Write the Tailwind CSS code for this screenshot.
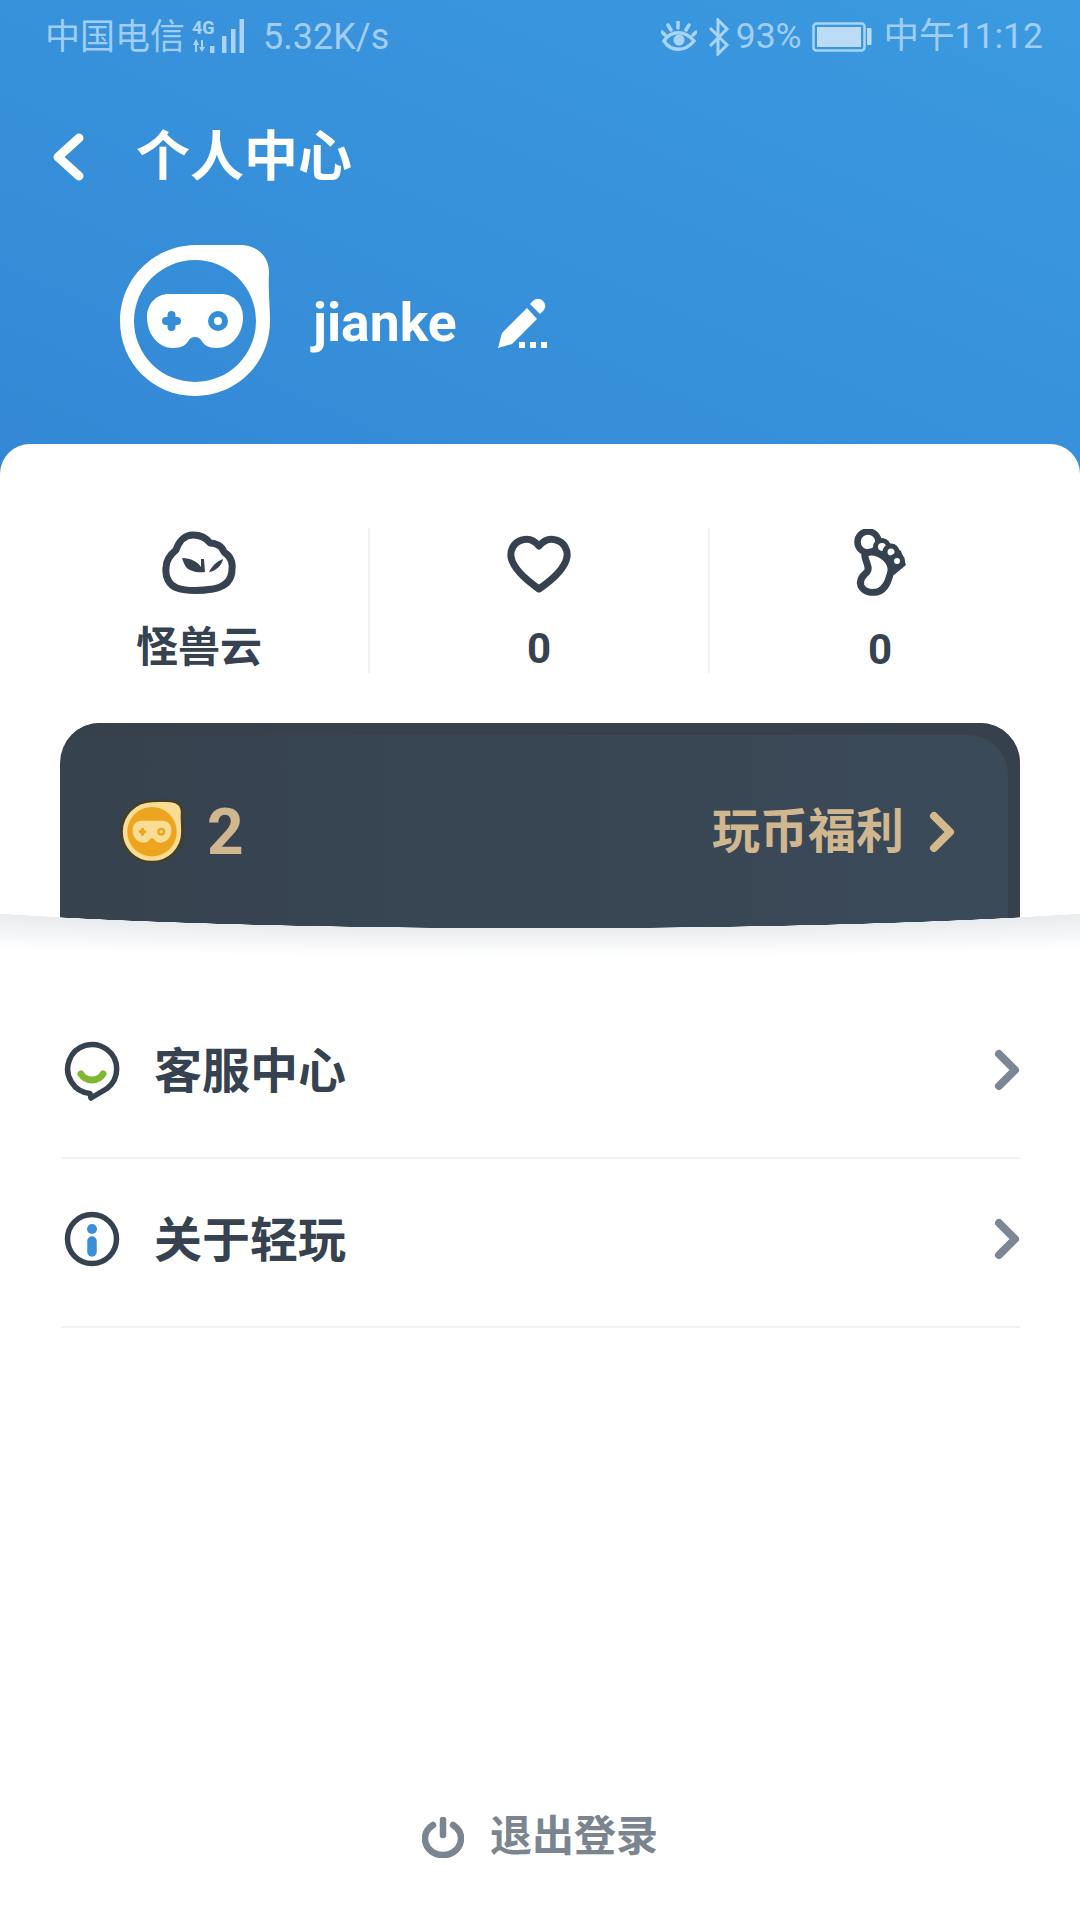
<!DOCTYPE html>
<html lang="zh-CN">

<head>
    <meta charset="UTF-8">
    <meta name="viewport" content="width=device-width, initial-scale=1.0">
    <title>个人中心</title>
    <script src="https://cdn.jsdelivr.net/npm/@tailwindcss/browser@4"></script>
</head>

<body class="font-['Roboto','Noto_Sans_CJK_SC',sans-serif] bg-white">
    <div class="w-[1080px] h-[1920px] flex flex-col overflow-hidden">

        <!-- blue header -->
        <header class="h-[474px] shrink-0 bg-linear-to-tr from-[#3488d5] to-[#3b9ae0] text-white">
            <!-- status bar -->
            <div class="h-[74px] pl-[45px] pr-[37px] flex items-center justify-between text-[#a0cdf4] text-[35.500px] leading-none">
                <div class="flex items-center">
                    <span class="text-[35px]">中国电信</span>
                    <svg class="ml-[6px]" width="54" height="40" viewBox="191 16 54 40" fill="#a9d4f5">
                        <text x="192" y="33" font-size="18" font-weight="700" font-family="Roboto">4G</text>
                        <path d="M196 38l-3 6h2v7h2v-7h2zM202 51l3-5h-2v-7h-2v7h-2z" />
                        <rect x="210" y="45" width="4.500" height="7" />
                        <rect x="222" y="35" width="4.500" height="17" />
                        <rect x="231" y="28" width="4.500" height="24" />
                        <rect x="239.500" y="18" width="4.500" height="34" />
                    </svg>
                    <span class="ml-[18px] text-[36px]">5.32K/s</span>
                </div>
                <div class="flex items-center">
                    <svg width="36" height="32" viewBox="657 22 36 32" fill="none" stroke="#a9d4f5" stroke-width="3.500" stroke-linecap="round">
                        <path d="M660 42C667 31 681 31 690 42C681 53 667 53 660 42Z" />
                        <path d="M674 23v6M664 26l3 5M685 26l-3 5M658 33l3 3M692 33l-3 3" />
                        <circle cx="675" cy="41" r="5.500" fill="#a9d4f5" stroke="none" />
                    </svg>
                    <svg class="ml-[11px]" width="22" height="38" viewBox="703 17 22 38" fill="none" stroke="#a9d4f5" stroke-width="3">
                        <path d="M705 27L722 44L713 53V19L722 28L705 45" />
                    </svg>
                    <span class="ml-[6px]">93%</span>
                    <svg class="ml-[10px]" width="60" height="30" viewBox="803 22 60 30" fill="none">
                        <rect x="804.500" y="23.500" width="51" height="27" rx="3" stroke="#a9d4f5" stroke-width="2.500" />
                        <rect x="808" y="27" width="44" height="20" fill="#bcdcf5" />
                        <rect x="858" y="28" width="4.500" height="17" rx="1" fill="#bcdcf5" />
                    </svg>
                    <span class="ml-[12px]">中午11:12</span>
                </div>
            </div>

            <!-- title -->
            <div class="h-[84px] mt-[42px] pl-[52px] flex items-center">
                <svg width="32" height="50" viewBox="50 132 32 50" fill="none" stroke="#fff" stroke-width="9" stroke-linecap="round" stroke-linejoin="round">
                    <path d="M77 137L56 156L77 175" />
                </svg>
                <h1 class="ml-[52px] text-[54px] leading-none font-bold">个人中心</h1>
            </div>

            <!-- profile -->
            <div class="mt-[45px] pl-[120px] flex items-center">
                <svg width="150" height="151" viewBox="0 0 150 151">
                    <path fill="#fff" fill-rule="evenodd" d="M0 76C0 34 33 1 75 0C95 0 110 -1 122 0C138 1 150 12 149 30C148 45 150 60 150 76C150 118 117 151 75 151C33 151 0 118 0 76ZM75 15A61 61 0 1 0 75 137A61 61 0 1 0 75 15Z" />
                    <path fill="#fff" d="M49 49H101C114 49 123 59 123 72C123 90 111 103 97 103C88 103 84 100 81 95C79 91 71 91 69 95C66 100 62 103 53 103C39 103 27 90 27 72C27 59 36 49 49 49Z" />
                    <path fill="none" stroke="#378ed8" stroke-width="8" stroke-linecap="round" d="M46 76H57M51.500 70V82" />
                    <circle cx="98" cy="76" r="7" fill="none" stroke="#378ed8" stroke-width="6" />
                </svg>
                <span class="ml-[43px] mt-[4px] text-[53.500px] leading-none font-bold">jianke</span>
                <svg class="ml-[40px] mt-[6px]" width="52" height="54" viewBox="497 295 52 54" fill="#fff">
                    <path d="M498 346L502 331L527 306L537 317L512 342Z" />
                    <path d="M530 302L533 299C536 296 540 296 543 299C546 302 546 306 543 309L540 312Z" />
                    <rect x="519" y="340" width="6" height="6" />
                    <rect x="530" y="340" width="6" height="6" />
                    <rect x="541" y="340" width="6" height="6" />
                </svg>
            </div>
        </header>

        <!-- white sheet -->
        <main class="-mt-[30px] flex-1 flex flex-col bg-white rounded-t-[30px] relative">

            <!-- stats -->
            <div class="mt-[84px] mx-[30px] h-[145px] grid grid-cols-3 text-[#36424f] text-[42px] font-bold leading-none">
                <div class="flex flex-col items-center border-r-2 border-[#f0f1f2]">
                    <svg class="mt-[3px]" width="76" height="64" viewBox="161 531 76 64" fill="none" stroke="#36424f" stroke-width="7" stroke-linejoin="round">
                        <path d="M193 535C202 535 207 539 210 543C216 543 222 546 224 552C230 556 233 562 232 569C232 581 224 587 213 589C200 591 186 591 177 588C169 585 165 577 166 568C166 560 171 554 176 550C179 541 185 535 193 535Z" />
                        <path fill="#36424f" stroke="none" d="M182 558C191 558 198 562 201 567L201 559L204 559L205 572C197 573 189 571 186 567C184 564 183 561 182 558Z" />
                        <path fill="#36424f" stroke="none" d="M223 559C222 565 216 571 209 572C212 566 217 561 223 559Z" />
                    </svg>
                    <span class="mt-[32px]">怪兽云</span>
                </div>
                <div class="flex flex-col items-center border-r-2 border-[#f0f1f2]">
                    <svg class="mt-[7px]" width="64" height="58" viewBox="507 534 64 58" fill="none" stroke="#36424f" stroke-width="7" stroke-linejoin="round">
                        <path d="M539 545C534 539 528 537 522 539C514 541 510 549 511 556C513 567 526 579 539 588C552 579 565 567 567 556C568 549 564 541 556 539C550 537 544 539 539 545Z" />
                    </svg>
                    <span class="mt-[35px]">0</span>
                </div>
                <div class="flex flex-col items-center">
                    <svg class="mt-[1px]" width="58" height="68" viewBox="850 530 58 68" fill="none" stroke="#36424f" stroke-width="6.500">
                        <path fill="#36424f" stroke="none" d="M870 533L900 552L905 566L893 576L862 556Z" />
                        <circle cx="867" cy="543" r="10.500" fill="#fff" />
                        <circle cx="881" cy="548" r="6.500" fill="#fff" stroke-width="5" />
                        <circle cx="890" cy="553" r="6" fill="#fff" stroke-width="5" />
                        <circle cx="896" cy="562" r="5.500" fill="#fff" stroke-width="5" />
                        <path fill="#fff" stroke-width="7" d="M864 558C866 566 869 569 866 573C860 578 858 582 860 587C863 593 870 594 876 593C885 591 888 580 890 572C891 562 880 553 870 553C866 553 863 555 864 558Z" />
                    </svg>
                    <span class="mt-[32px]">0</span>
                </div>
            </div>

            <!-- coin card, its bottom edge is cut by the curve below -->
            <div class="relative mt-[50px] px-[60px] h-[207px]">
                <div class="h-full pl-[60px] pr-[65px] pt-[10px] flex items-center justify-between rounded-t-[40px] bg-linear-to-r from-[#36424e] to-[#3b4a59] shadow-[inset_-12px_12px_0_#36414c] text-[#d0b78f] font-bold leading-none">
                    <div class="flex items-center">
                        <svg width="64" height="65" viewBox="-4 -4 158 159">
                            <path fill="#f9dd95" stroke="#453f27" stroke-width="6" d="M0 76C0 34 33 1 75 0C95 0 110 -1 122 0C138 1 150 12 149 30C148 45 150 60 150 76C150 118 117 151 75 151C33 151 0 118 0 76Z" />
                            <circle cx="75" cy="76" r="61" fill="#eda41f" />
                            <path fill="#f9dd95" d="M49 49H101C114 49 123 59 123 72C123 90 111 103 97 103C88 103 84 100 81 95C79 91 71 91 69 95C66 100 62 103 53 103C39 103 27 90 27 72C27 59 36 49 49 49Z" />
                            <path fill="none" stroke="#eda41f" stroke-width="8" stroke-linecap="round" d="M46 76H57M51.500 70V82" />
                            <circle cx="98" cy="76" r="7" fill="none" stroke="#eda41f" stroke-width="6" />
                        </svg>
                        <span class="ml-[23px] mt-[2px] text-[64px]">2</span>
                    </div>
                    <div class="flex items-center">
                        <span class="text-[48px]">玩币福利</span>
                        <svg class="ml-[25px]" width="26" height="42" viewBox="929 808 26 42" fill="none" stroke="#d4b98a" stroke-width="8" stroke-linecap="round" stroke-linejoin="round">
                            <path d="M934 813L950 829L934 845" />
                        </svg>
                    </div>
                </div>
                <!-- curved edge with its soft shadow -->
                <div class="absolute inset-x-0 top-[177px] h-[64px] bg-[radial-gradient(ellipse_700px_40px_at_50%_-12px,transparent_100%,#e9ecee_100.8%,#ffffff_172%)]"></div>
            </div>

            <!-- rows -->
            <div class="relative mt-[60px] mx-[61px] w-[959px] text-[#36424f] text-[48px] font-bold leading-none">
                <div class="h-[169px] pb-[4px] border-b-2 border-[#f0f2f3] flex items-center">
                    <svg class="ml-[3px]" width="56" height="62" viewBox="64 1040 56 62" fill="none" stroke="#36424f" stroke-width="5.500" stroke-linecap="round" stroke-linejoin="round">
                        <path d="M90 1092.400A24.500 24.500 0 1 1 107 1087.500L91 1097Z" />
                        <path stroke="#7fb934" stroke-width="7" d="M81 1073C86 1081 98 1081 103 1073" />
                    </svg>
                    <span class="ml-[34px]">客服中心</span>
                    <svg class="ml-auto -mt-[4px]" width="26" height="42" viewBox="994 1049 26 42" fill="none" stroke="#7b8794" stroke-width="8" stroke-linecap="round" stroke-linejoin="round">
                        <path d="M999 1054L1015 1070L999 1086" />
                    </svg>
                </div>
                <div class="h-[169px] pb-[4px] border-b-2 border-[#f0f2f3] flex items-center">
                    <svg class="ml-[3px] -mt-[4px]" width="56" height="56" viewBox="64 1210 56 56" fill="none">
                        <circle cx="92" cy="1238" r="24.500" stroke="#36424f" stroke-width="5.500" />
                        <circle cx="92" cy="1228" r="5" fill="#3a8fd8" />
                        <path d="M92 1240V1251" stroke="#3a8fd8" stroke-width="9.500" stroke-linecap="round" />
                    </svg>
                    <span class="ml-[34px]">关于轻玩</span>
                    <svg class="ml-auto -mt-[4px]" width="26" height="42" viewBox="994 1049 26 42" fill="none" stroke="#7b8794" stroke-width="8" stroke-linecap="round" stroke-linejoin="round">
                        <path d="M999 1054L1015 1070L999 1086" />
                    </svg>
                </div>
            </div>

            <!-- logout -->
            <div class="mt-auto mb-[62px] flex items-center justify-center text-[#7b8590] text-[42px] font-bold leading-none">
                <svg width="42" height="42" viewBox="422 1815 42 42" fill="none" stroke="#7b8590" stroke-width="6.500" stroke-linecap="round">
                    <path d="M433 1824C427 1828 425 1832 425 1837C425 1847 433 1854 443 1854C453 1854 461 1847 461 1837C461 1832 459 1828 453 1824" />
                    <path d="M443 1819V1834" />
                </svg>
                <span class="ml-[26px]">退出登录</span>
            </div>
        </main>
    </div>
</body>

</html>
